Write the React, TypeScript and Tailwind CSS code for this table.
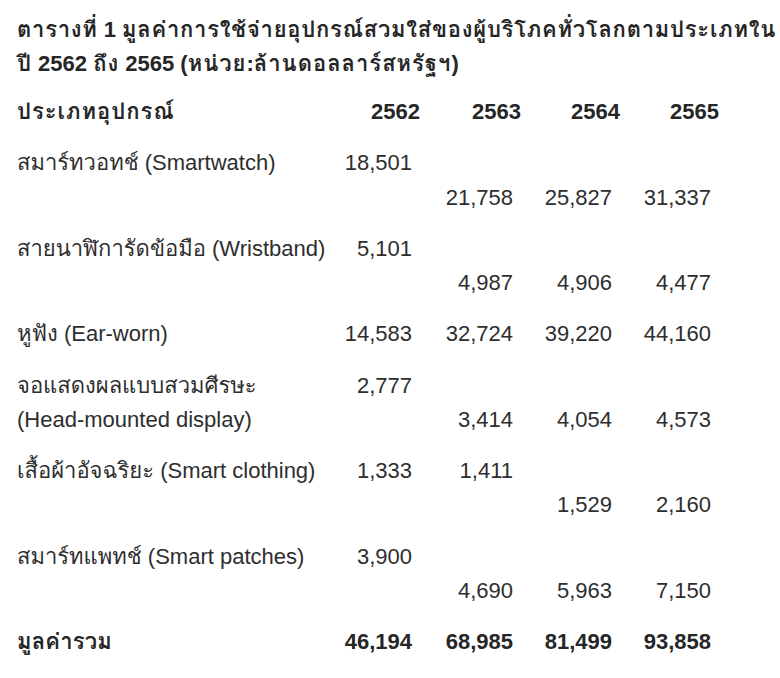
import React from "react";

type Row = { th: string; en: string; twoLine?: boolean; vals: [string, number][] };

const rows: Row[] = [
  { th: "สมาร์ทวอทช์", en: "(Smartwatch)", vals: [["18,501", 1], ["21,758", 2], ["25,827", 2], ["31,337", 2]] },
  { th: "สายนาฬิการัดข้อมือ", en: "(Wristband)", vals: [["5,101", 1], ["4,987", 2], ["4,906", 2], ["4,477", 2]] },
  { th: "หูฟัง", en: "(Ear-worn)", vals: [["14,583", 1], ["32,724", 1], ["39,220", 1], ["44,160", 1]] },
  { th: "จอแสดงผลแบบสวมศีรษะ", en: "(Head-mounted display)", twoLine: true, vals: [["2,777", 1], ["3,414", 2], ["4,054", 2], ["4,573", 2]] },
  { th: "เสื้อผ้าอัจฉริยะ", en: "(Smart clothing)", vals: [["1,333", 1], ["1,411", 1], ["1,529", 2], ["2,160", 2]] },
  { th: "สมาร์ทแพทช์", en: "(Smart patches)", vals: [["3,900", 1], ["4,690", 2], ["5,963", 2], ["7,150", 2]] },
];

export default function App() {
  return (
    <div
      className="min-h-[678px] w-[780px] bg-white px-[17px] pt-[13px] text-[#2e2e2e]"
      style={{ fontFamily: '"Liberation Sans", Arial, Loma, "Noto Sans Thai", sans-serif' }}
    >
      <h1 className="whitespace-nowrap text-[22px] font-bold leading-[34px] text-[#262626]">
        <div>
          <span className="tracking-[0.75px]">ตารางที่</span> 1{" "}
          <span className="tracking-[0.75px]">มูลค่าการใช้จ่ายอุปกรณ์สวมใส่ของผู้บริโภคทั่วโลกตามประเภทใน</span>
        </div>
        <div>
          <span className="tracking-[1px]">ปี</span> 2562 <span className="tracking-[1px]">ถึง</span> 2565 (
          <span className="tracking-[1px]">หน่วย</span>:<span className="tracking-[1px]">ล้านดอลลาร์สหรัฐฯ</span>)
        </div>
      </h1>
      <div className="mt-[14px] grid grid-cols-[320px_83px_101px_99px_99px] gap-y-[17px] text-[22px] leading-[34.25px]">
        <div className="font-bold text-[#262626]">
          <span className="tracking-[1px]">ประเภทอุปกรณ์</span>
        </div>
        <div className="text-right font-bold text-[#262626]">2562</div>
        <div className="text-right font-bold text-[#262626]">2563</div>
        <div className="text-right font-bold text-[#262626]">2564</div>
        <div className="text-right font-bold text-[#262626]">2565</div>
        {rows.map((r, i) => (
          <React.Fragment key={i}>
            <div className="whitespace-nowrap">
              {r.twoLine ? (
                <>
                  <div>{r.th}</div>
                  <div>{r.en}</div>
                </>
              ) : (
                <div>
                  {r.th} {r.en}
                </div>
              )}
            </div>
            {r.vals.map(([v, line], k) => (
              <div key={k} className="pr-[8px] text-right">
                {line === 2 ? <div>&nbsp;</div> : null}
                <div>{v}</div>
              </div>
            ))}
          </React.Fragment>
        ))}
        <div className="font-bold text-[#262626]">
          <span className="tracking-[0.2px]">มูลค่ารวม</span>
        </div>
        <div className="pr-[8px] text-right font-bold text-[#262626]">46,194</div>
        <div className="pr-[8px] text-right font-bold text-[#262626]">68,985</div>
        <div className="pr-[8px] text-right font-bold text-[#262626]">81,499</div>
        <div className="pr-[8px] text-right font-bold text-[#262626]">93,858</div>
      </div>
    </div>
  );
}
